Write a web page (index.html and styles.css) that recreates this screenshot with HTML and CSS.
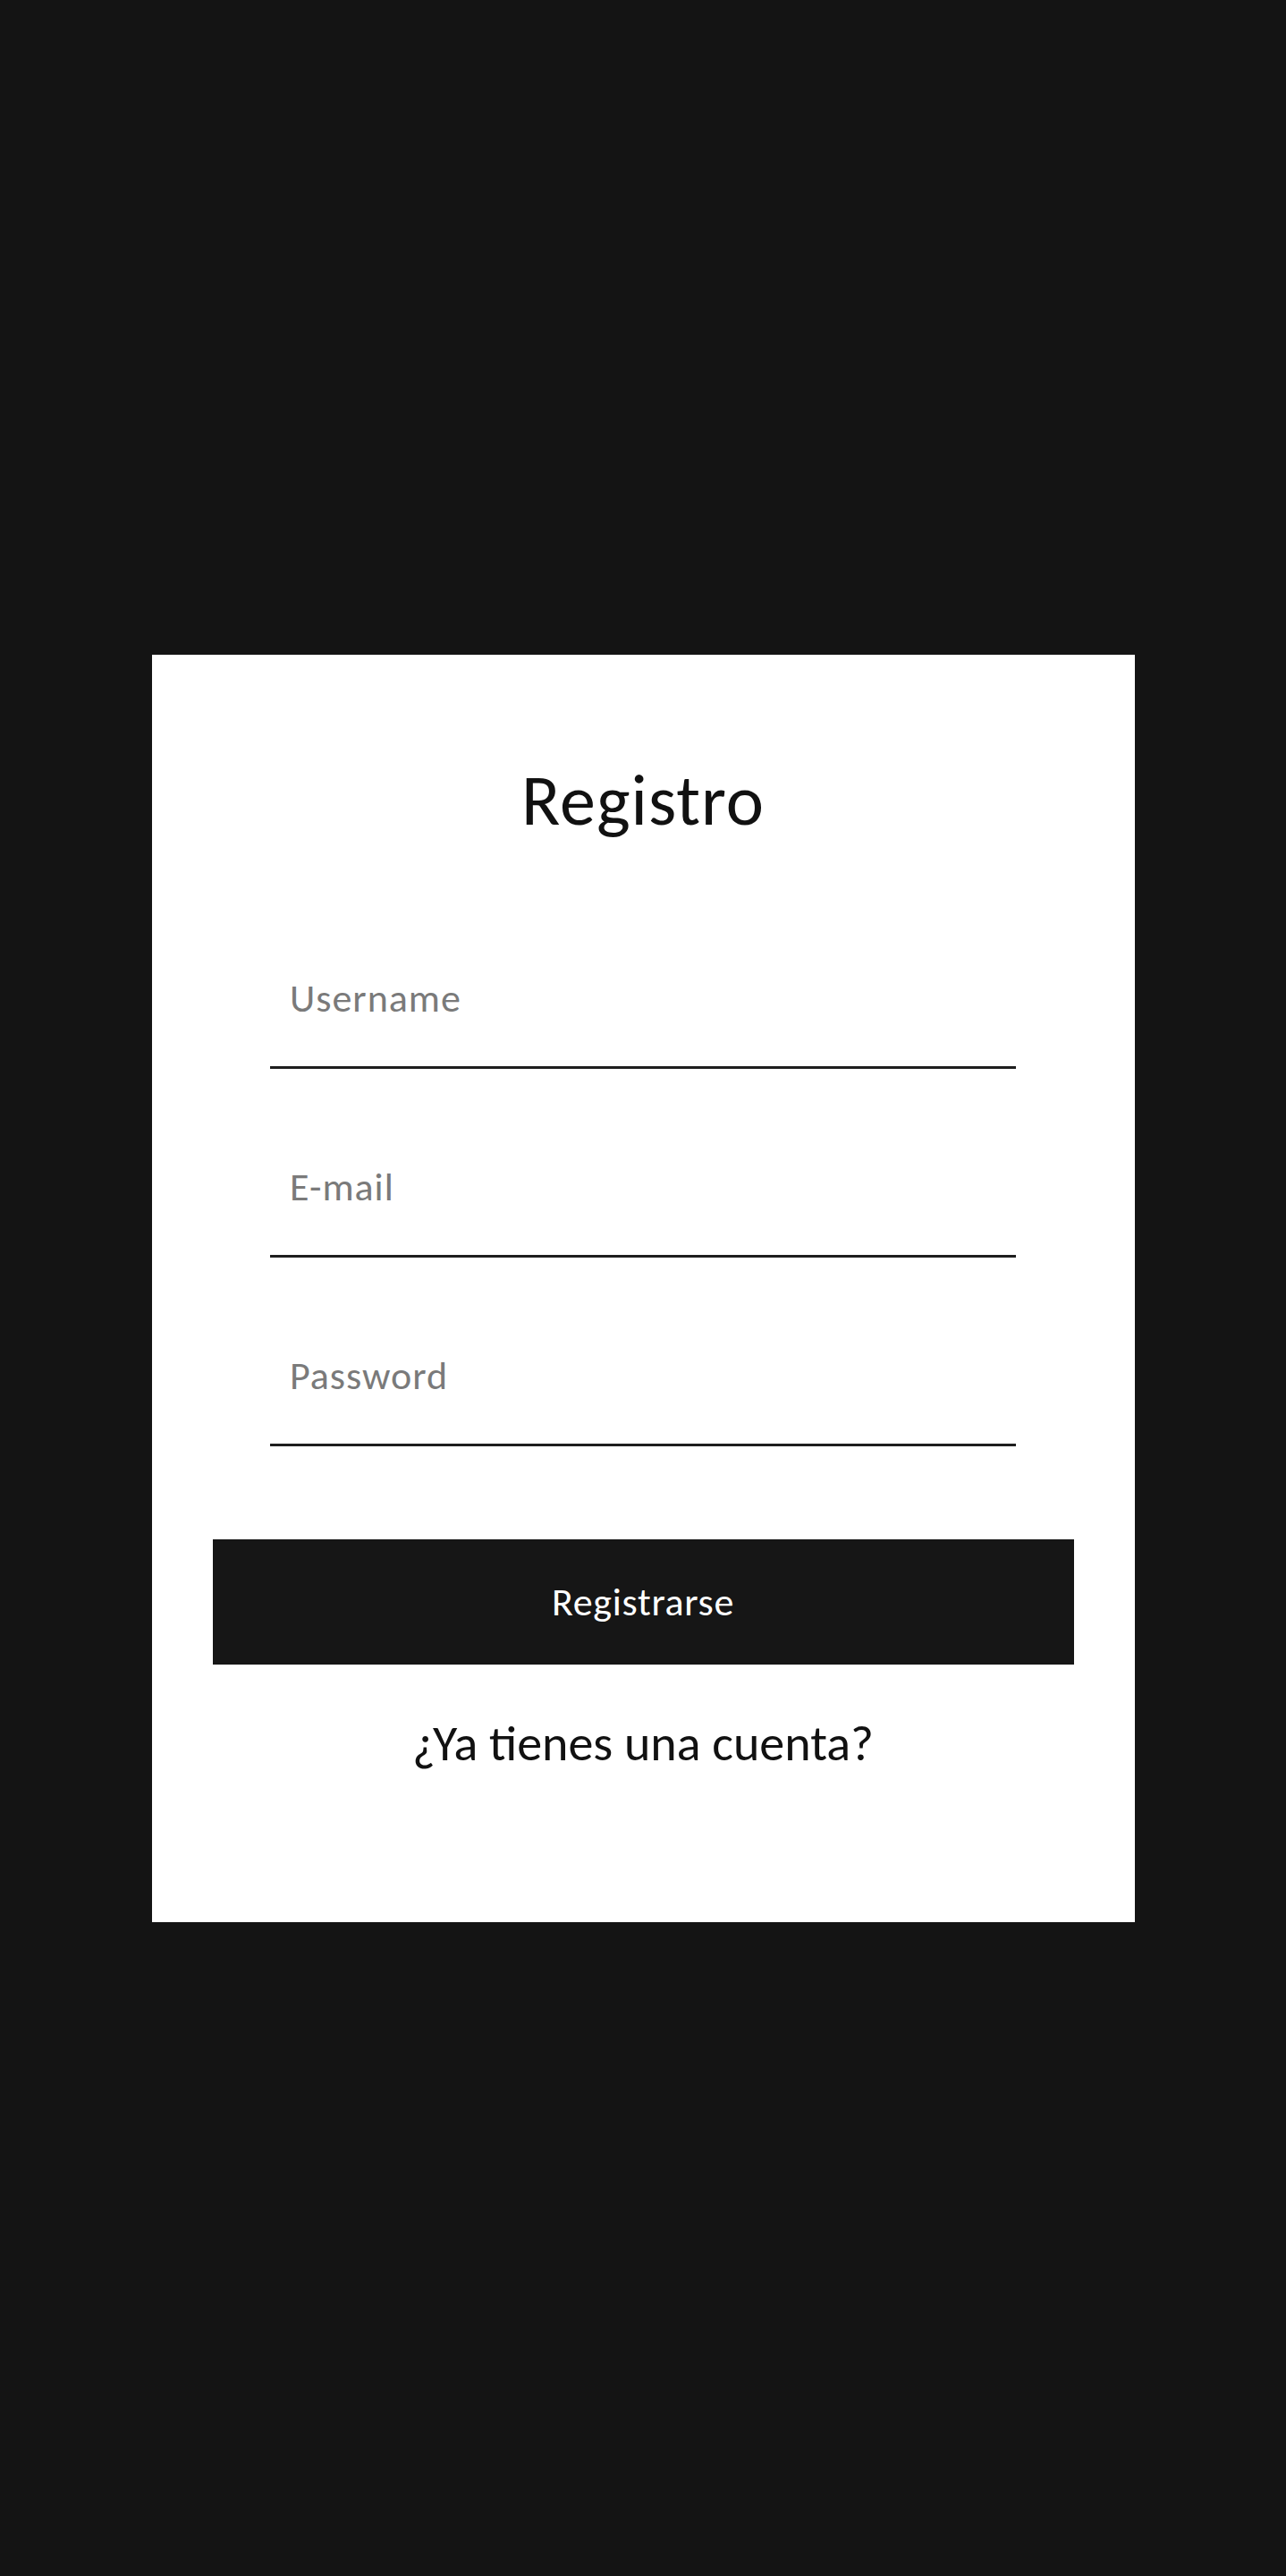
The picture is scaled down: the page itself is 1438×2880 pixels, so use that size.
FILE: index.html
```html
<!DOCTYPE html>
<html lang="es">
<head>
<meta charset="utf-8">
<title>Registro</title>
<link rel="stylesheet" href="styles.css">
</head>
<body>
<main class="page">
  <form class="card">
    <h1 class="title">Registro</h1>
    <div class="fields">
      <input class="field" type="text" placeholder="Username">
      <input class="field" type="email" placeholder="E-mail">
      <input class="field" type="password" placeholder="Password">
    </div>
    <button class="submit" type="button">Registrarse</button>
    <a class="login-link" href="#">¿Ya tienes una cuenta?</a>
  </form>
</main>
</body>
</html>
```

FILE: styles.css
```css
* { box-sizing: border-box; }
html, body { margin: 0; padding: 0; }
body {
  background: #141414;
  font-family: "Carlito", "Calibri", "Lato", "Open Sans", sans-serif;
}
.page {
  min-height: 2880px;
  display: flex;
  align-items: center;
  justify-content: center;
}
.card {
  width: 1099px;
  height: 1417px;
  background: #ffffff;
  padding: 123px 68px 0;
  display: flex;
  flex-direction: column;
  align-items: center;
}
.title {
  margin: 0;
  font-size: 80px;
  line-height: 80px;
  font-weight: 400;
  letter-spacing: 1px;
  color: #111111;
}
.fields {
  margin-top: 111px;
  width: 834px;
  display: flex;
  flex-direction: column;
  gap: 62px;
}
.field {
  display: block;
  width: 100%;
  height: 149px;
  border: 0;
  border-bottom: 3px solid #1e1e1e;
  padding: 0 22px 6px;
  font-family: inherit;
  font-size: 44px;
  font-weight: 300;
  letter-spacing: 1px;
  color: #111;
  background: transparent;
  outline: none;
}
.field::placeholder { color: #7a7a7a; opacity: 1; }
.submit {
  margin-top: 104px;
  width: 963px;
  height: 140px;
  border: 0;
  background: #161616;
  color: #ffffff;
  font-family: inherit;
  font-size: 44px;
  font-weight: 300;
  letter-spacing: 0.7px;
  padding: 0;
  cursor: pointer;
}
.login-link {
  margin-top: 58px;
  font-size: 56px;
  line-height: 60px;
  color: #111111;
  text-decoration: none;
}
```
